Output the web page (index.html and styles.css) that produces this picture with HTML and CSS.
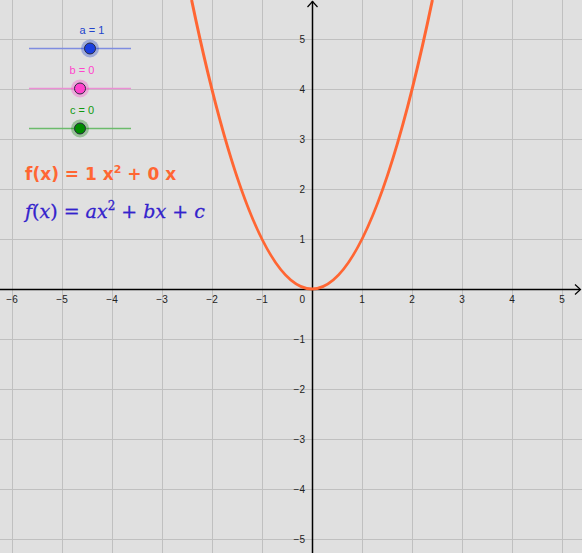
FILE: index.html
```html
<!DOCTYPE html>
<html>
<head>
<meta charset="utf-8">
<link rel="stylesheet" href="styles.css">
</head>
<body>
<div class="stage">
<svg class="canvas" width="582" height="553" viewBox="0 0 582 553" xmlns="http://www.w3.org/2000/svg">
  <rect x="0" y="0" width="582" height="553" class="bg"/>
  <g class="grid">
    <line x1="12" y1="0" x2="12" y2="553"/>
    <line x1="62" y1="0" x2="62" y2="553"/>
    <line x1="112" y1="0" x2="112" y2="553"/>
    <line x1="162" y1="0" x2="162" y2="553"/>
    <line x1="212" y1="0" x2="212" y2="553"/>
    <line x1="262" y1="0" x2="262" y2="553"/>
    <line x1="362" y1="0" x2="362" y2="553"/>
    <line x1="412" y1="0" x2="412" y2="553"/>
    <line x1="462" y1="0" x2="462" y2="553"/>
    <line x1="512" y1="0" x2="512" y2="553"/>
    <line x1="562" y1="0" x2="562" y2="553"/>
    <line x1="0" y1="39" x2="582" y2="39"/>
    <line x1="0" y1="89" x2="582" y2="89"/>
    <line x1="0" y1="139" x2="582" y2="139"/>
    <line x1="0" y1="189" x2="582" y2="189"/>
    <line x1="0" y1="239" x2="582" y2="239"/>
    <line x1="0" y1="339" x2="582" y2="339"/>
    <line x1="0" y1="389" x2="582" y2="389"/>
    <line x1="0" y1="439" x2="582" y2="439"/>
    <line x1="0" y1="489" x2="582" y2="489"/>
    <line x1="0" y1="539" x2="582" y2="539"/>
  </g>
  <g class="axes">
    <line x1="0" y1="289.5" x2="580" y2="289.5"/>
    <line x1="312.5" y1="1" x2="312.5" y2="553"/>
    <polyline points="575,284.5 580.5,289.5 575,294.5" class="arrow"/>
    <polyline points="307.5,7 312.5,1.5 317.5,7" class="arrow"/>
  </g>
  <g class="xlabels">
    <text x="12" y="303">−6</text>
    <text x="62" y="303">−5</text>
    <text x="112" y="303">−4</text>
    <text x="162" y="303">−3</text>
    <text x="212" y="303">−2</text>
    <text x="262" y="303">−1</text>
    <text x="362" y="303">1</text>
    <text x="412" y="303">2</text>
    <text x="462" y="303">3</text>
    <text x="512" y="303">4</text>
    <text x="562" y="303">5</text>
  </g>
  <g class="ylabels">
    <text x="305" y="303">0</text>
    <text x="305" y="43">5</text>
    <text x="305" y="93">4</text>
    <text x="305" y="143">3</text>
    <text x="305" y="193">2</text>
    <text x="305" y="243">1</text>
    <text x="305" y="343">−1</text>
    <text x="305" y="393">−2</text>
    <text x="305" y="443">−3</text>
    <text x="305" y="493">−4</text>
    <text x="305" y="543">−5</text>
  </g>
  <path class="curve" d="M 191.6 0 Q 312 578 432.4 0"/>

  <g class="slider slider-a">
    <line x1="29" y1="48.5" x2="131" y2="48.5"/>
    <circle class="halo" cx="90" cy="48.5" r="9"/>
    <circle class="knob" cx="90" cy="48.5" r="5.5"/>
    <text x="92" y="34">a = 1</text>
  </g>
  <g class="slider slider-b">
    <line x1="29" y1="88.5" x2="131" y2="88.5"/>
    <circle class="halo" cx="80" cy="88.5" r="9"/>
    <circle class="knob" cx="80" cy="88.5" r="5.5"/>
    <text x="82" y="74">b = 0</text>
  </g>
  <g class="slider slider-c">
    <line x1="29" y1="128.5" x2="131" y2="128.5"/>
    <circle class="halo" cx="80" cy="128.5" r="9"/>
    <circle class="knob" cx="80" cy="128.5" r="5.5"/>
    <text x="82" y="114">c = 0</text>
  </g>

  <text class="f1" x="25" y="180">f(x) = 1 x<tspan class="sup" dy="-7">2</tspan><tspan dy="7"> + 0 x</tspan></text>
  <text class="f2" x="25" y="218"><tspan class="it">f</tspan><tspan class="up">(</tspan><tspan class="it">x</tspan><tspan class="up">) = </tspan><tspan class="it">ax</tspan><tspan class="sup2" dy="-8">2</tspan><tspan class="up" dy="8"> + </tspan><tspan class="it">bx</tspan><tspan class="up"> + </tspan><tspan class="it">c</tspan></text>
</svg>
</div>
</body>
</html>
```
FILE: styles.css
```css
html, body {
  margin: 0;
  padding: 0;
  background: #e0e0e0;
}
.stage {
  position: relative;
  width: 582px;
  height: 553px;
  overflow: hidden;
}
.canvas {
  display: block;
}
.bg {
  fill: #e0e0e0;
}
.grid line {
  stroke: #c0c0c0;
  stroke-width: 1;
  shape-rendering: crispEdges;
}
.axes line {
  stroke: #000;
  stroke-width: 1.5;
}
.axes .arrow {
  fill: none;
  stroke: #000;
  stroke-width: 1.2;
}
.xlabels text,
.ylabels text {
  font-family: "Liberation Sans", Arial, sans-serif;
  font-size: 10px;
  fill: #222;
}
.xlabels text {
  text-anchor: middle;
}
.ylabels text {
  text-anchor: end;
}
.curve {
  fill: none;
  stroke: #ff6633;
  stroke-width: 3;
}
.slider line {
  stroke-width: 1.5;
}
.slider text {
  font-family: "Liberation Sans", Arial, sans-serif;
  font-size: 11px;
  text-anchor: middle;
}
.slider .knob {
  stroke: #2a2a40;
  stroke-width: 1;
}
.slider .halo {
  opacity: 0.35;
}
.slider-a line { stroke: #7f8de0; }
.slider-a .halo { fill: #2244cc; }
.slider-a .knob { fill: #1a3fe0; }
.slider-a text { fill: #2244cc; }
.slider-b line { stroke: #ea8fd4; }
.slider-b .halo { fill: #ff44cc; }
.slider-b .knob { fill: #ff44cc; }
.slider-b text { fill: #ff44cc; }
.slider-c line { stroke: #6cbb6c; }
.slider-c .halo { fill: #118811; }
.slider-c .knob { fill: #008c00; }
.slider-c text { fill: #119911; }
.f1 {
  font-family: "DejaVu Sans", "Liberation Sans", sans-serif;
  font-weight: bold;
  font-size: 17px;
  fill: #ff6633;
  white-space: pre;
}
.f1 .sup {
  font-size: 11px;
}
.f2 {
  font-family: "DejaVu Serif", "Liberation Serif", serif;
  font-size: 19px;
  fill: #3322cc;
  white-space: pre;
  stroke: #3322cc;
  stroke-width: 0.3;
}
.f2 .it {
  font-style: italic;
}
.f2 .sup2 {
  font-size: 12px;
}
```
